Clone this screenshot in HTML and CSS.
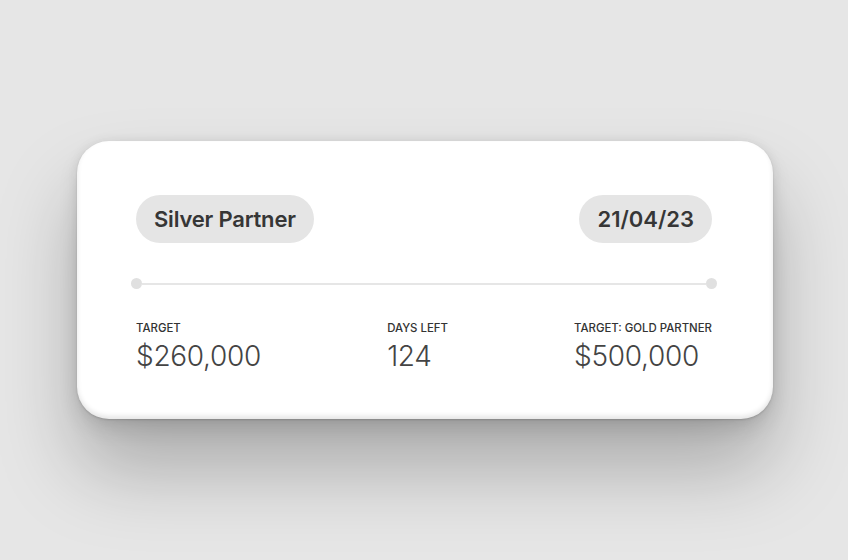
FILE: index.html
```html
<!DOCTYPE html>
<html>
<head>
<meta charset="utf-8">
<link rel="stylesheet" href="styles.css">
</head>
<body>
<div class="stage">
  <div class="card">
    <div class="header">
      <span class="pill">Silver Partner</span>
      <span class="pill date">21/04/23</span>
    </div>
    <div class="track">
      <span class="dot"></span>
      <span class="bar"></span>
      <span class="dot"></span>
    </div>
    <div class="stats">
      <div class="stat">
        <div class="label">TARGET</div>
        <div class="value">$260,000</div>
      </div>
      <div class="stat">
        <div class="label">DAYS LEFT</div>
        <div class="value">124</div>
      </div>
      <div class="stat">
        <div class="label">TARGET: GOLD PARTNER</div>
        <div class="value">$500,000</div>
      </div>
    </div>
  </div>
</div>
</body>
</html>
```
FILE: styles.css
```css
html, body {
  margin: 0;
  padding: 0;
}
body {
  background: #e6e6e6;
  font-family: Inter, "Noto Sans", sans-serif;
  width: 848px;
  height: 560px;
  overflow: hidden;
}
.stage {
  padding-top: 141px;
  padding-left: 77px;
}
.card {
  box-sizing: border-box;
  width: 696px;
  height: 278px;
  background: #fff;
  border-radius: 32px;
  padding: 54px 61px 0 59px;
  box-shadow: inset 0 -3px 5px rgba(0,0,0,0.10), 0 1px 2px rgba(0,0,0,0.14), 0 10px 20px rgba(0,0,0,0.10), 0 50px 80px rgba(0,0,0,0.26), 0 0 12px rgba(0,0,0,0.06);
}
.header {
  display: flex;
  justify-content: space-between;
  align-items: center;
}
.pill {
  display: inline-flex;
  align-items: center;
  height: 48px;
  padding: 0 18px;
  border-radius: 24px;
  background: #e5e5e5;
  color: #363636;
  font-size: 22px;
  font-weight: 600;
  letter-spacing: -0.2px;
}
.pill.date {
  letter-spacing: 0;
}
.track {
  display: flex;
  align-items: center;
  margin: 35px -5px 0;
  height: 11px;
}
.dot {
  width: 11px;
  height: 11px;
  border-radius: 50%;
  background: #e0e0e0;
  flex: none;
}
.bar {
  flex: 1;
  height: 2px;
  background: #e6e6e6;
}
.stats {
  display: flex;
  justify-content: space-between;
  margin-top: 32px;
}
.label {
  font-size: 11.4px;
  line-height: 14px;
  font-weight: 500;
  color: #333;
}
.value {
  margin-top: 4px;
  font-size: 28px;
  line-height: 34px;
  font-weight: 300;
  color: #444;
  letter-spacing: -0.3px;
}
```
